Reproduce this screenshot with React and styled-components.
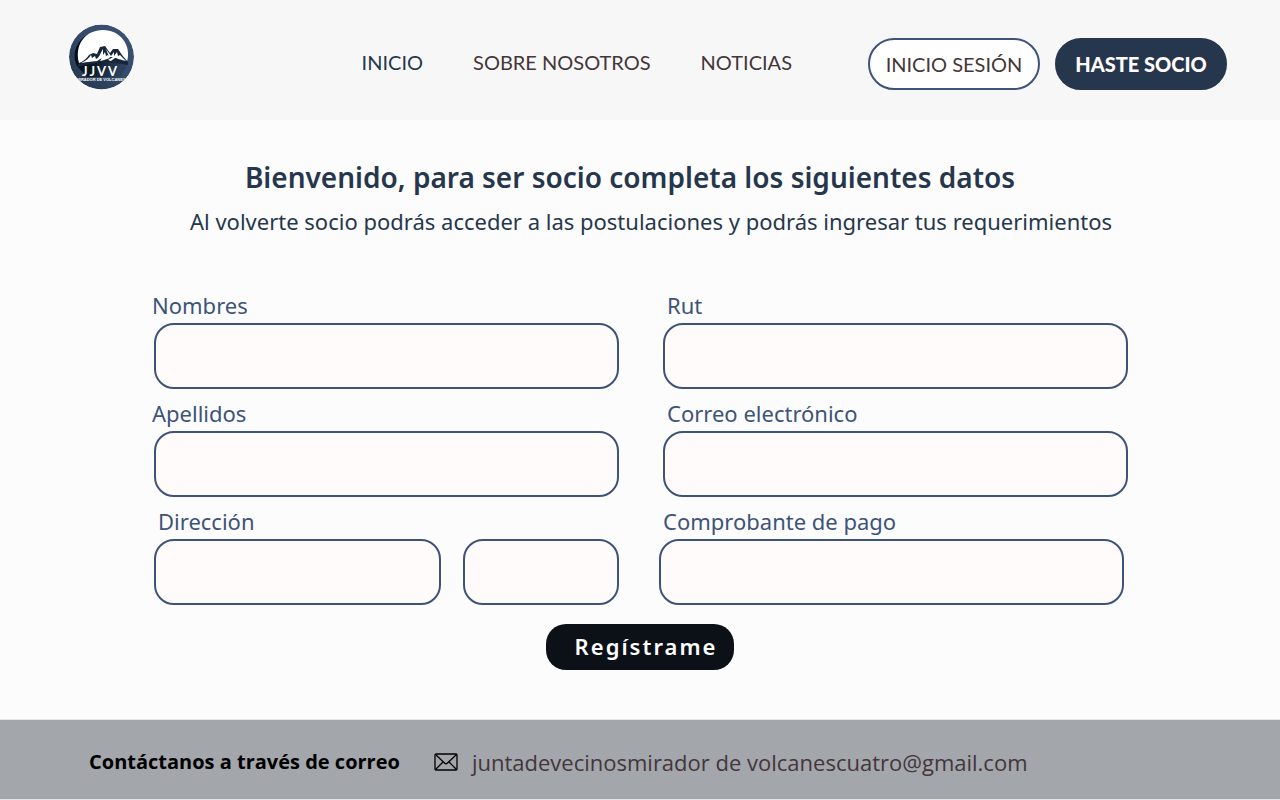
import React from 'react';
import styled, { createGlobalStyle } from 'styled-components';

const navy = '#26374d';
const steel = '#3d5478';
const cocoa = '#44363a';

const GlobalStyle = createGlobalStyle`
  *, *::before, *::after { box-sizing: border-box; }
  body {
    margin: 0;
    background: #fcfcfc;
    font-family: 'Noto Sans', 'Open Sans', sans-serif;
  }
`;

const Page = styled.div`
  display: flex;
  flex-direction: column;
  min-height: 100vh;
`;

const Header = styled.header`
  display: flex;
  align-items: center;
  min-height: 120px;
  padding: 0 53px 0 68px;
  background: #f7f7f7;
  font-family: Lato, sans-serif;
  font-size: 20px;
  line-height: 24px;
`;

const HomeLink = styled.a`
  display: block;
  height: 66px;
  margin-bottom: 6px;
`;

const Nav = styled.nav`
  display: flex;
  gap: 50px;
  margin: 4px 76px 0 auto;
`;

const NavLink = styled.a`
  color: ${({ $active }) => ($active ? navy : cocoa)};
  text-decoration: none;
  white-space: nowrap;
`;

const Actions = styled.div`
  display: flex;
  gap: 15px;
  margin-top: 8px;
`;

const PillButton = styled.button`
  width: 172px;
  height: 52px;
  padding: 0;
  border: 2px solid ${({ $filled }) => ($filled ? navy : steel)};
  border-radius: 26px;
  background: ${({ $filled }) => ($filled ? navy : '#ffffff')};
  color: ${({ $filled }) => ($filled ? '#fffbfa' : cocoa)};
  font: inherit;
  font-weight: ${({ $filled }) => ($filled ? 900 : 400)};
  white-space: nowrap;
  cursor: pointer;
`;

const Main = styled.main`
  flex: 1;
  padding: 36px 152px 48px 154px;
`;

const Title = styled.h1`
  margin: 0;
  padding-right: 22px;
  color: ${navy};
  font-size: 28px;
  font-weight: 600;
  line-height: 42px;
  text-align: center;
`;

const Subtitle = styled.p`
  margin: 7px -20px 0 0;
  color: ${navy};
  font-size: 22px;
  line-height: 32px;
  text-align: center;
`;

const Form = styled.form`
  display: flex;
  flex-direction: column;
  gap: 10px;
  margin-top: 54px;
`;

const FormRow = styled.div`
  display: flex;
  gap: ${({ $shifted }) => ($shifted ? '40px' : '44px')};
  padding-right: ${({ $shifted }) => ($shifted ? '4px' : '0')};
`;

const Field = styled.div`
  flex: 1 1 0;
  min-width: 0;
`;

const Label = styled.label`
  display: block;
  margin-left: ${({ $inset }) => ($inset ? '4px' : '-2px')};
  padding-bottom: 4px;
  color: ${steel};
  font-size: 22px;
  line-height: 28px;
`;

const SplitInputs = styled.div`
  display: grid;
  grid-template-columns: 287fr 156fr;
  gap: 22px;
`;

const TextInput = styled.input`
  display: block;
  min-width: 0;
  width: 100%;
  height: 66px;
  padding: 0 18px;
  border: 2px solid ${steel};
  border-radius: 20px;
  background: #fffbfa;
  color: ${navy};
  font: inherit;
  font-size: 20px;
`;

const SubmitButton = styled.button`
  align-self: center;
  width: 188px;
  height: 46px;
  margin: 9px 2px 0 0;
  padding: 0 16px 2px 28px;
  border: 0;
  border-radius: 20px;
  background: #0c1118;
  color: #ffffff;
  font: inherit;
  font-size: 22px;
  font-weight: 600;
  letter-spacing: 2px;
  cursor: pointer;
`;

const Footer = styled.footer`
  display: flex;
  align-items: center;
  min-height: 81px;
  padding: 4px 89px 0;
  border-top: 1px solid #e3e5e7;
  border-bottom: 1px solid #e3e5e7;
  background: #a3a6ab;
  font-family: 'Open Sans', 'Noto Sans', sans-serif;
  line-height: 28px;
`;

const ContactText = styled.strong`
  color: #000000;
  font-size: 20px;
  font-weight: 700;
`;

const MailLink = styled.a`
  display: flex;
  align-items: center;
  gap: 14px;
  margin-left: 34px;
  color: ${cocoa};
  font-size: 22px;
  text-decoration: none;
`;

const LogoName = styled.text`
  fill: #ffffff;
  font: 700 13px Lato, sans-serif;
  letter-spacing: 2px;
`;

const LogoCaption = styled.text`
  fill: #ffffff;
  font: 700 4px 'Liberation Sans', sans-serif;
`;

function Logo() {
  return (
    <svg width="66" height="66" viewBox="0 0 66 66" role="img" aria-label="JJVV Mirador de Volcanes">
      <defs>
        <linearGradient id="ring" x1="1" y1="0" x2="0" y2="1">
          <stop offset="0" stopColor="#3d5475" />
          <stop offset="0.5" stopColor="#334a68" />
          <stop offset="1" stopColor="#22344b" />
        </linearGradient>
        <linearGradient id="shade" x1="0" y1="0" x2="1" y2="0.3">
          <stop offset="0" stopColor="#02070d" />
          <stop offset="0.5" stopColor="#0b1623" />
          <stop offset="1" stopColor="#2c415d" />
        </linearGradient>
        <clipPath id="disc"><circle cx="33.500" cy="33" r="32.500" /></clipPath>
      </defs>
      <g clipPath="url(#disc)">
        <circle cx="33.500" cy="33" r="32.500" fill="url(#ring)" />
        <path d="M17 12C5 22 5 34 9 42L19 53L52 53L60 40L36 24Z" fill="url(#shade)" />
        <path d="M11 39C6 20 18 6 35 6C52 6 64 21 59 38Q36 32 11 39Z" fill="#ffffff" />
        <path d="M10 40C16 37 19 34 21 31L25 29L29 30L32 23L37 22L42 29L45 25L50 25L54 31L60 38L60 41Q36 35 10 43Z" fill="#17263a" />
        <path d="M13 39C18 37 21 34 23 31L24 34L27 32L28 35C31 34 32 30 35 25L35 31L37 28L38 32L40 31L42 34C38 35 34 37 31 37C25 37 20 38 13 39Z" fill="#ffffff" />
        <path d="M38 25L43 32L46 28L46 32L49 28L50 32L52 31L58 37C52 36 49 34 47 34L43 37L40 36L45 33L41 33Z" fill="#ffffff" />
        <path d="M29 37L34 34L32 37Z" fill="#17263a" />
        <LogoName x="14" y="52">JJVV</LogoName>
        <LogoCaption x="33" y="57" textAnchor="middle">MIRADOR DE VOLCANES</LogoCaption>
      </g>
    </svg>
  );
}

function MailIcon() {
  return (
    <svg width="24" height="18" viewBox="0 0 24 18" fill="none" stroke="#000000" strokeWidth="1.300" strokeLinejoin="round" aria-hidden="true">
      <rect x="1" y="1" width="22" height="16" rx="1" />
      <path d="M1.500 1.500L10.500 10Q12 11.500 13.500 10L22.500 1.500M1.500 16.500L9 9M22.500 16.500L15 9" />
    </svg>
  );
}

function TextField({ id, label, inset, type = 'text' }) {
  return (
    <Field>
      <Label htmlFor={id} $inset={inset}>{label}</Label>
      <TextInput id={id} name={id} type={type} />
    </Field>
  );
}

export default function App() {
  return (
    <Page>
      <GlobalStyle />
      <Header>
        <HomeLink href="#inicio"><Logo /></HomeLink>
        <Nav>
          <NavLink href="#inicio" $active>INICIO</NavLink>
          <NavLink href="#nosotros">SOBRE NOSOTROS</NavLink>
          <NavLink href="#noticias">NOTICIAS</NavLink>
        </Nav>
        <Actions>
          <PillButton type="button">INICIO SESIÓN</PillButton>
          <PillButton type="button" $filled>HASTE SOCIO</PillButton>
        </Actions>
      </Header>
      <Main>
        <Title>Bienvenido, para ser socio completa los siguientes datos</Title>
        <Subtitle>
          Al volverte socio podrás acceder a las postulaciones y podrás ingresar tus requerimientos
        </Subtitle>
        <Form onSubmit={(event) => event.preventDefault()}>
          <FormRow>
            <TextField id="nombres" label="Nombres" />
            <TextField id="rut" label="Rut" inset />
          </FormRow>
          <FormRow>
            <TextField id="apellidos" label="Apellidos" />
            <TextField id="correo" label="Correo electrónico" type="email" inset />
          </FormRow>
          <FormRow $shifted>
            <Field>
              <Label htmlFor="direccion" $inset>Dirección</Label>
              <SplitInputs>
                <TextInput id="direccion" name="direccion" />
                <TextInput aria-label="Número" name="numero" />
              </SplitInputs>
            </Field>
            <TextField id="comprobante" label="Comprobante de pago" inset />
          </FormRow>
          <SubmitButton type="submit">Regístrame</SubmitButton>
        </Form>
      </Main>
      <Footer>
        <ContactText>Contáctanos a través de correo</ContactText>
        <MailLink href="mailto:juntadevecinosmiradordevolcanescuatro@gmail.com">
          <MailIcon />
          juntadevecinosmirador de volcanescuatro@gmail.com
        </MailLink>
      </Footer>
    </Page>
  );
}
